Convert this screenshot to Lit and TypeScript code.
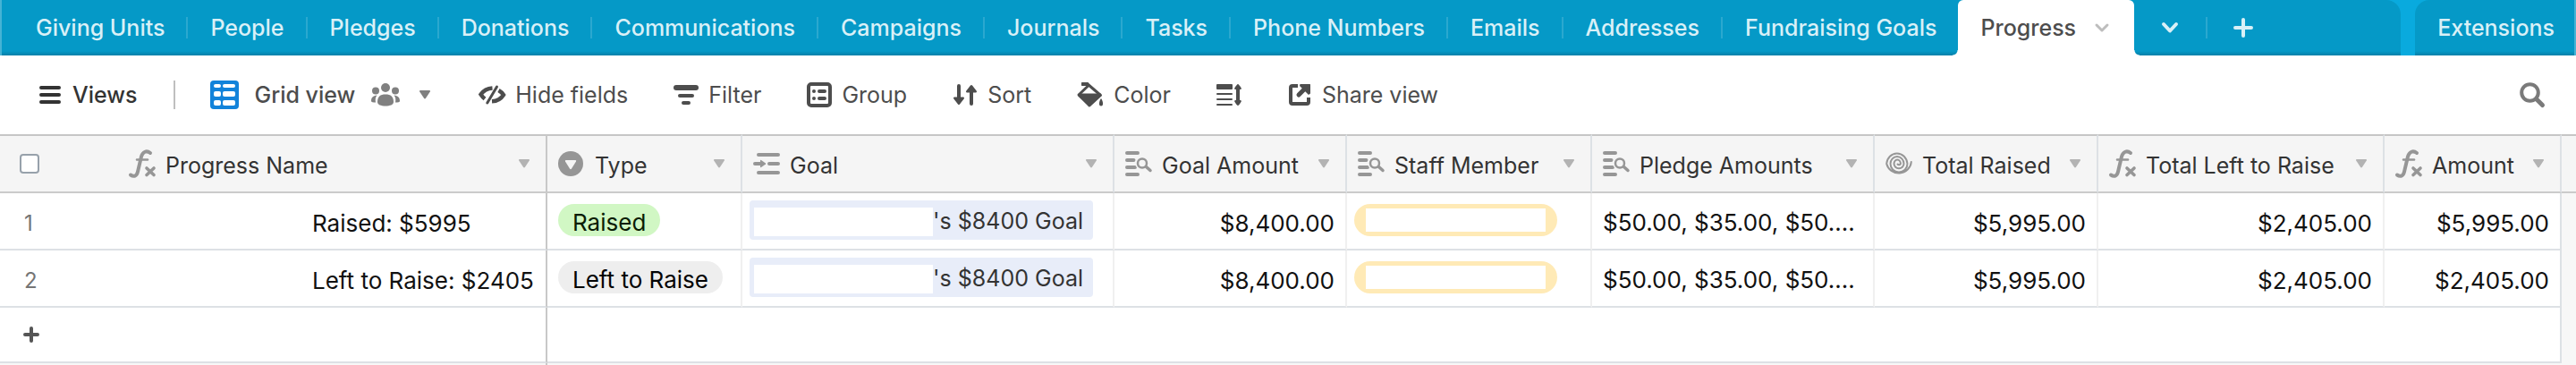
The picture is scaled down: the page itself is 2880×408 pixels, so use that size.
import { LitElement, html, css, svg, nothing } from "lit";
import { customElement, property } from "lit/decorators.js";
import { classMap } from "lit/directives/class-map.js";

// Each icon: [width, height, drawing]
const ICONS: Record<string, [number, number, unknown]> = {
  menu: [24, 20, svg`<path d="M2 2H22M2 10H22M2 18H22" fill="none" stroke="currentColor" stroke-width="4" stroke-linecap="round"/>`],
  grid: [32, 32, svg`<rect width="32" height="32" rx="4"/><g fill="#fff"><rect x="4" y="4" width="8" height="4" rx="2"/><rect x="14" y="4" width="14" height="4" rx="2"/><rect x="4" y="12" width="8" height="6" rx="2"/><rect x="14" y="12" width="14" height="6" rx="2"/><rect x="4" y="22" width="8" height="6" rx="2"/><rect x="14" y="22" width="14" height="6" rx="2"/></g>`],
  people: [32, 26, svg`<ellipse cx="16" cy="5" rx="5" ry="5"/><circle cx="5" cy="8.500" r="4"/><circle cx="27" cy="8.500" r="4"/><path d="M7 21C7 15 10 12.500 16 12.500S25 15 25 21C25 24 21 25.500 16 25.500S7 24 7 21ZM0 20C0 16 2 14 6.500 13.500C4.500 16 4.500 18 5 21.500C2 21.500 0 21.500 0 20ZM32 20C32 16 30 14 25.500 13.500C27.500 16 27.500 18 27 21.500C30 21.500 32 21.500 32 20Z"/>`],
  caret: [12, 10, svg`<path d="M1 0H11Q12.500 0 11.800 1.400L7 8.800Q6 10 5 8.800L.2 1.400Q-.5 0 1 0Z"/>`],
  hide: [30, 20, svg`<g fill="none" stroke="currentColor"><path d="M15.500 2.500C9 3 5 6 2.500 9.500C3.800 11.500 5.200 13 7 14.500M22.500 5C25 6.500 26.800 8.300 28 10C25.500 14 21 17 15 17.300" stroke-width="4.400"/><path d="M20.500 1L9.800 19" stroke-width="3" stroke-linecap="round"/></g>`],
  filter: [28, 22, svg`<rect width="28" height="6" rx="3"/><rect x="5" y="10" width="18" height="4" rx="2"/><rect x="9" y="18" width="10" height="4" rx="2"/>`],
  group: [28, 28, svg`<rect x="2" y="2" width="24" height="24" rx="3" fill="none" stroke="currentColor" stroke-width="4"/><rect x="6" y="8" width="4" height="4" rx="2"/><rect x="12" y="8" width="10" height="4" rx="2"/><rect x="6" y="16" width="4" height="4" rx="2"/><rect x="12" y="16" width="10" height="4" rx="2"/>`],
  sort: [28, 24, svg`<path d="M7 2V17M21 22V7" fill="none" stroke="currentColor" stroke-width="4" stroke-linecap="round"/><path d="M1.800 14.500H12.200Q13.600 15 12.700 16.500L8 22.500Q7 23.500 6 22.500L1.300 16.500Q.4 15 1.800 14.500ZM15.800 9.500Q14.400 9 15.300 7.500L20 1.500Q21 .5 22 1.500L26.700 7.500Q27.600 9 26.200 9.500Z"/>`],
  paint: [30, 28, svg`<path d="M5 2H12L26.500 14.500L14 26L2 14L13 3.500" fill="none" stroke="currentColor" stroke-width="3" stroke-linejoin="round"/><path d="M2 12.500H27L14 26.500L1 15Z"/><rect x="5" y="0" width="8" height="4" rx="1"/><path d="M27 18C29.500 21.500 30 26.500 27 26.500S24.500 21.500 27 18Z"/>`],
  rowHeight: [28, 24, svg`<rect width="18" height="6" rx="1"/><path d="M1 11H17M1 17H17M1 23H17" fill="none" stroke="currentColor" stroke-width="2" stroke-linecap="round"/><path d="M24 3V21" fill="none" stroke="currentColor" stroke-width="4"/><path d="M24 0Q25 0 27.800 4.500Q28 6 27 6H21Q20 6 20.200 4.500Q23 0 24 0ZM24 24Q25 24 27.800 19.500Q28 18 27 18H21Q20 18 20.200 19.500Q23 24 24 24Z"/>`],
  share: [28, 24, svg`<path d="M12 2H6Q4 2 4 4V20Q4 22 6 22H22Q24 22 24 20V15" fill="none" stroke="currentColor" stroke-width="4"/><path d="M13 12L20 5" fill="none" stroke="currentColor" stroke-width="5" stroke-linecap="round"/><path d="M14.500 0H25.500Q26 0 26 1V10.500L24 12L14 2Z"/>`],
  search: [28, 28, svg`<circle cx="11.500" cy="11.500" r="9.300" fill="none" stroke="currentColor" stroke-width="4"/><path d="M18.500 18.500L25.500 25.500" fill="none" stroke="currentColor" stroke-width="5" stroke-linecap="round"/>`],
  chevron: [20, 14, svg`<path d="M3 3L10 10.500L17 3" fill="none" stroke="currentColor" stroke-width="4" stroke-linecap="round" stroke-linejoin="round"/>`],
  chevronSmall: [16, 10, svg`<path d="M2 2L8 8L14 2" fill="none" stroke="currentColor" stroke-width="3" stroke-linecap="round" stroke-linejoin="round"/>`],
  plus: [20, 20, svg`<path d="M10 1V19M1 10H19" fill="none" stroke="currentColor" stroke-width="4" stroke-linecap="round"/>`],
  plusSmall: [16, 16, svg`<path d="M8 1V15M1 8H15" fill="none" stroke="currentColor" stroke-width="4" stroke-linecap="round"/>`],
  formula: [30, 32, svg`<g fill="none" stroke="currentColor" stroke-linecap="round"><path d="M2 28.500C5.500 31 8.800 30 10 25L14 8C15.500 2.500 20 .8 24 4" stroke-width="4"/><path d="M9 11.500H21" stroke-width="2.500"/><path d="M20 21L28 28.500M28 21L20 28.500" stroke-width="3.600"/></g>`],
  select: [30, 28, svg`<circle cx="14" cy="14" r="14"/><path d="M8.500 10H19.500Q20.600 10.200 20 11.500L15 19.500Q14 21 13 19.500L8 11.500Q7.400 10.200 8.500 10Z" fill="#f5f5f5"/>`],
  link: [30, 24, svg`<g fill="none" stroke="currentColor" stroke-width="4" stroke-linecap="round"><path d="M6 2H28M18 12H28M6 22H28M2 12H9"/></g><path d="M8 8.500Q8 7.500 9 8L14 11.500Q14.500 12 14 12.500L9 16Q8 16.500 8 15.500Z"/>`],
  lookup: [30, 28, svg`<g fill="none" stroke="currentColor" stroke-linecap="round"><path d="M2 2H14M2 10H9.500M2 18H11M2 26H14" stroke-width="4"/></g><circle cx="19" cy="13.500" r="7.800" fill="#f5f5f5"/><g fill="none" stroke="currentColor" stroke-linecap="round"><circle cx="19" cy="13.500" r="5" stroke-width="2.500"/><path d="M23.500 17.500L28 21.500" stroke-width="3.500"/></g>`],
  rollup: [30, 28, svg`<path d="M28.800 12A14 13.500 0 0 1 1.200 14A11.700 12.800 0 0 1 24.500 14A9.500 9.500 0 0 1 5.500 14A7.500 8 0 0 1 20.500 14A5.500 5.200 0 0 1 9.500 14A3.700 4.500 0 0 1 16.900 14A2 2 0 0 1 13.500 14.500" fill="none" stroke="currentColor" stroke-width="2" stroke-linecap="round"/>`],
};

const icon = (name: string) => {
  const [w, h, body] = ICONS[name];
  return html`<svg class="icon" width=${w} height=${h} viewBox="0 0 ${w} ${h}" aria-hidden="true" fill="currentColor">${body}</svg>`;
};

const base = css`
  * { box-sizing: border-box; }
  button {
    margin: 0; padding: 0; border: 0; background: none;
    font: inherit; color: inherit; cursor: pointer; white-space: nowrap;
  }
  .icon { display: block; flex: none; overflow: visible; }
`;

@customElement("table-tabs")
class TableTabs extends LitElement {
  @property({ attribute: false }) tabs: string[] = [];
  @property() active = "";

  static styles = [base, css`
    :host {
      display: flex; gap: 16px; height: 62px; background: #09aade;
      font-size: 25px; font-weight: 500; color: #d9f0f7;
      border-left: 2px solid #45b3d5; border-right: 2px solid #45b3d5;
    }
    .panel {
      display: flex; align-items: stretch;
      background: linear-gradient(to top, #0680a8, #0599c7 5px);
    }
    .tables { flex: 1; border-top-right-radius: 16px; min-width: 0; padding-left: 13px; }
    .tab { display: flex; align-items: center; padding: 0 24px 0 25px; }
    .extensions { border-top-left-radius: 16px; align-items: center; padding: 0 22px 0 25px; }
    .rule { width: 2px; height: 24px; align-self: center; background: #2ba8cf; }
    .active {
      position: relative; gap: 21px; padding-right: 28px;
      background: #fff; color: #4d4d4d; border-radius: 6px 6px 0 0;
    }
    .active::before, .active::after {
      content: ""; position: absolute; bottom: 0; width: 6px; height: 6px;
    }
    .active::before { right: 100%; background: radial-gradient(circle at 0 0, transparent 5px, #fff 6px); }
    .active::after { left: 100%; background: radial-gradient(circle at 100% 0, transparent 5px, #fff 6px); }
    .active .icon { color: #bdbdbd; }
    .tool { display: flex; align-items: center; padding: 0 30px; }
  `];

  render() {
    return html`
      <nav class="panel tables" aria-label="Tables">
        ${this.tabs.map((name, i) => {
          const on = name === this.active;
          const beforeActive = this.tabs[i + 1] === this.active;
          return html`
            <button class=${classMap({ tab: true, active: on })} aria-current=${on ? "page" : nothing}>
              ${name}${on ? icon("chevronSmall") : nothing}
            </button>
            ${on || beforeActive ? nothing : html`<span class="rule"></span>`}`;
        })}
        <button class="tool" aria-label="All tables">${icon("chevron")}</button>
        <span class="rule"></span>
        <button class="tool" aria-label="Add table">${icon("plus")}</button>
      </nav>
      <button class="panel extensions">Extensions</button>
    `;
  }
}

@customElement("view-bar")
class ViewBar extends LitElement {
  static styles = [base, css`
    :host {
      display: flex; align-items: center; height: 88px; padding: 0 35px 0 44px;
      background: #fff; font-size: 25px; color: #4d4d4d;
    }
    button { display: flex; align-items: center; gap: 11px; }
    .views { gap: 13px; font-weight: 500; color: #333; }
    .divider { width: 2px; height: 32px; margin: 0 39px 0 40px; background: #bfbfbf; }
    .view { gap: 18px; font-weight: 500; }
    .view .icon { color: #808080; }
    .view .icon:first-child { color: #1283da; }
    .view .icon:last-child { margin-left: 4px; }
    .tools { display: flex; gap: 51px; margin-left: 54px; }
    .search { margin-left: auto; color: #7a7a7a; }
  `];

  render() {
    const tools = [
      ["hide", "Hide fields"], ["filter", "Filter"], ["group", "Group"], ["sort", "Sort"],
      ["paint", "Color"], ["rowHeight", ""], ["share", "Share view"],
    ];
    return html`
      <button class="views">${icon("menu")}Views</button>
      <span class="divider"></span>
      <button class="view">${icon("grid")}Grid view${icon("people")}${icon("caret")}</button>
      <div class="tools">
        ${tools.map(([glyph, label]) => html`
          <button aria-label=${label || "Row height"}>${icon(glyph)}${label || nothing}</button>`)}
      </div>
      <button class="search" aria-label="Search">${icon("search")}</button>
    `;
  }
}

interface Field { name: string; glyph: string; width: number; }
interface Row { name: string; type: string; tone: string; goal: string; goalAmount: string; pledges: string; raised: string; left: string; amount: string; }

@customElement("record-grid")
class RecordGrid extends LitElement {
  @property({ attribute: false }) fields: Field[] = [];
  @property({ attribute: false }) rows: Row[] = [];

  static styles = [base, css`
    :host { display: flex; flex-direction: column; flex: 1; background: #f7f7f7; color: #111; font-size: 26px; }
    table { width: 100%; table-layout: fixed; border-collapse: separate; border-spacing: 0; }
    .numbers { width: 132px; }
    th, td { padding: 0; border-bottom: 2px solid #dde1e5; text-align: left; font-weight: 400; }
    th { background: #f5f5f5; border-top: 2px solid #c6c6c6; border-bottom-color: #cbcbcb; }
    th.field { border-right: 2px solid #dde1e5; }
    td { background: #fff; border-right: 2px solid #f0f0f0; }
    td.number { border-right: 0; }
    th.primary, td.primary { border-right-color: #c8c8c8; }
    td.edge { border-right-color: #dde1e5; }
    td.beyond { background: #f7f7f7; border: 0; }
    .head, .cell { display: flex; align-items: center; height: 62px; padding: 4px 12px 0; white-space: nowrap; }
    .head { gap: 11px; padding-top: 0; font-size: 25px; color: #333; }
    .head .icon { color: #969696; }
    .label { flex: 1; padding-top: 3px; }
    .menu { margin-right: 6px; }
    .head .menu .icon { color: #b3b3b3; }
    .number .cell { padding-left: 27px; font-size: 24px; color: #757575; }
    .check { display: block; margin: 0 0 0 22px; width: 22px; height: 22px; appearance: none; background: #fff; border: 2px solid #97a1ab; border-radius: 4px; }
    .primary .cell { padding-left: 217px; }
    .money { justify-content: flex-end; }
    .clip { display: block; overflow: hidden; text-overflow: ellipsis; line-height: 58px; }
    .chips { align-items: flex-start; padding: 12px 8px 0; }
    .type { padding-left: 12px; }
    .pill { display: flex; align-items: center; height: 36px; padding: 4px 16px 0; border-radius: 18px; }
    .green { background: #d1f7c4; color: #0b1d05; }
    .gray { background: #eee; color: #040404; }
    .yellow { width: 227px; padding: 0 13px; background: #ffeab6; }
    .blank { flex: 1; height: 26px; background: #fff; }
    .linked { padding-top: 8px; }
    .record { display: flex; align-items: center; height: 44px; width: 384px; padding: 1px 11px 0 5px; border-radius: 4px; background: #e8edf9; color: #333; font-size: 25px; }
    .record .blank { height: 32px; margin-top: 3px; }
    .add { display: flex; align-items: center; width: 100%; height: 60px; padding-left: 27px; color: #555; }
    .below { flex: 1; width: 612px; border-right: 2px solid #c8c8c8; }
  `];

  render() {
    return html`
      <table>
        <colgroup>
          <col class="numbers">
          ${this.fields.map((f) => html`<col style="width:${f.width}px">`)}
          <col>
        </colgroup>
        <thead>
          <tr>
            <th><input class="check" type="checkbox" aria-label="Select all records"></th>
            ${this.fields.map((f, i) => html`
              <th class=${classMap({ field: true, primary: i === 0 })} scope="col">
                <div class="head">
                  ${icon(f.glyph)}<span class="label">${f.name}</span>
                  <button class="menu" aria-label="${f.name} menu">${icon("caret")}</button>
                </div>
              </th>`)}
            <th></th>
          </tr>
        </thead>
        <tbody>
          ${this.rows.map((r, i) => html`
            <tr>
              <td class="number"><div class="cell">${i + 1}</div></td>
              <td class="primary"><div class="cell">${r.name}</div></td>
              <td><div class="cell chips type"><span class="pill ${r.tone}">${r.type}</span></div></td>
              <td><div class="cell chips linked"><span class="record"><span class="blank"></span>${r.goal}</span></div></td>
              <td><div class="cell money">${r.goalAmount}</div></td>
              <td><div class="cell chips"><span class="pill yellow"><span class="blank"></span></span></div></td>
              <td><div class="cell clip">${r.pledges}</div></td>
              <td><div class="cell money">${r.raised}</div></td>
              <td><div class="cell money">${r.left}</div></td>
              <td class="edge"><div class="cell money">${r.amount}</div></td>
              <td class="beyond"></td>
            </tr>`)}
          <tr>
            <td class="number"><button class="add" aria-label="Add record">${icon("plusSmall")}</button></td>
            <td class="primary"></td>
            <td class="edge" colspan="8"></td>
            <td class="beyond"></td>
          </tr>
        </tbody>
      </table>
      <div class="below"></div>
    `;
  }
}

const TABS = [
  "Giving Units", "People", "Pledges", "Donations", "Communications", "Campaigns", "Journals",
  "Tasks", "Phone Numbers", "Emails", "Addresses", "Fundraising Goals", "Progress",
];

const FIELDS: Field[] = [
  { name: "Progress Name", glyph: "formula", width: 480 },
  { name: "Type", glyph: "select", width: 218 },
  { name: "Goal", glyph: "link", width: 416 },
  { name: "Goal Amount", glyph: "lookup", width: 260 },
  { name: "Staff Member", glyph: "lookup", width: 274 },
  { name: "Pledge Amounts", glyph: "lookup", width: 316 },
  { name: "Total Raised", glyph: "rollup", width: 250 },
  { name: "Total Left to Raise", glyph: "formula", width: 320 },
  { name: "Amount", glyph: "formula", width: 198 },
];

const ROWS: Row[] = [
  { name: "Raised: $5995", type: "Raised", tone: "green", goal: "'s $8400 Goal", goalAmount: "$8,400.00", pledges: "$50.00, $35.00, $50....", raised: "$5,995.00", left: "$2,405.00", amount: "$5,995.00" },
  { name: "Left to Raise: $2405", type: "Left to Raise", tone: "gray", goal: "'s $8400 Goal", goalAmount: "$8,400.00", pledges: "$50.00, $35.00, $50....", raised: "$5,995.00", left: "$2,405.00", amount: "$2,405.00" },
];

@customElement("app-root")
class AppRoot extends LitElement {
  static styles = css`
    :host {
      display: flex; flex-direction: column; min-height: 100vh;
      font-family: Inter, "Liberation Sans", sans-serif;
    }
  `;

  render() {
    return html`
      <table-tabs .tabs=${TABS} active="Progress"></table-tabs>
      <view-bar></view-bar>
      <record-grid .fields=${FIELDS} .rows=${ROWS}></record-grid>
    `;
  }
}
